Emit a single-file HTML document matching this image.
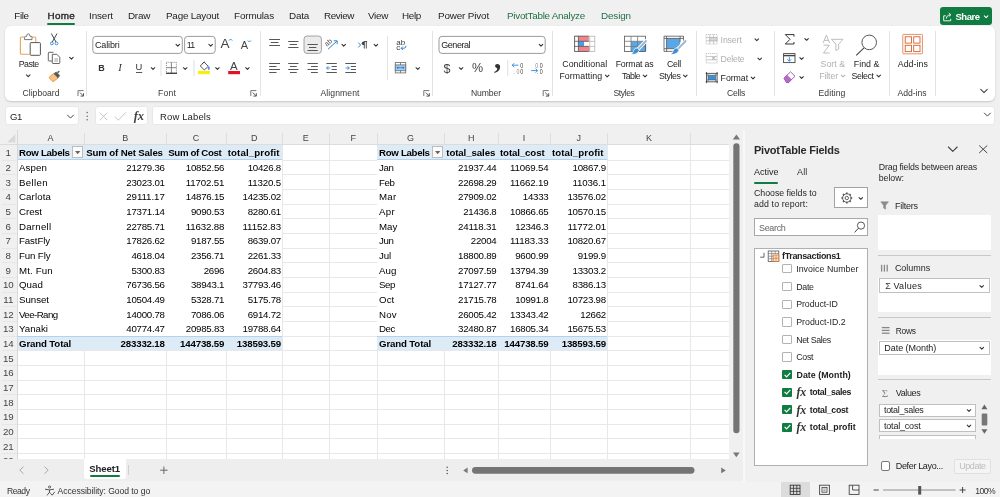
<!DOCTYPE html>
<html><head><meta charset="utf-8"><title>Excel</title><style>
html,body{margin:0;padding:0;}
body{width:1000px;height:497px;overflow:hidden;position:relative;background:#f0f0f0;font-family:"Liberation Sans",sans-serif;}
#root{position:absolute;left:0;top:0;width:1000px;height:497px;overflow:hidden;will-change:transform;}
#root div{position:absolute;box-sizing:border-box;}
#root svg{position:absolute;overflow:visible;}
.t{position:absolute;white-space:nowrap;}
</style></head><body><div id="root">
<div style="left:5px;top:26px;width:990px;height:75px;background:#fff;border-radius:6px;box-shadow:0 1px 2px rgba(0,0,0,0.18);"></div>
<div style="left:5px;top:106.3px;width:74px;height:19px;background:#fff;border-radius:3px;border:1px solid #e8e8e8;"></div>
<div style="left:95px;top:106.3px;width:53px;height:19px;background:#fff;border-radius:3px;border:1px solid #e8e8e8;"></div>
<div style="left:152px;top:106.3px;width:842.5px;height:19px;background:#fff;border-radius:3px;border:1px solid #e8e8e8;"></div>
<span id="t1" class="t" style="top:9.30px;font-size:9.9px;line-height:14px;color:#242424;letter-spacing:-0.405px;left:14.3px;">File</span>
<span id="t2" class="t" style="top:9.30px;font-size:9.9px;line-height:14px;color:#242424;letter-spacing:0.264px;left:47.6px;-webkit-text-stroke:0.35px #242424;">Home</span>
<span id="t3" class="t" style="top:9.30px;font-size:9.9px;line-height:14px;color:#242424;letter-spacing:-0.117px;left:89px;">Insert</span>
<span id="t4" class="t" style="top:9.30px;font-size:9.9px;line-height:14px;color:#242424;letter-spacing:-0.262px;left:128px;">Draw</span>
<span id="t5" class="t" style="top:9.30px;font-size:9.9px;line-height:14px;color:#242424;letter-spacing:-0.224px;left:166px;">Page Layout</span>
<span id="t6" class="t" style="top:9.30px;font-size:9.9px;line-height:14px;color:#242424;letter-spacing:-0.145px;left:234px;">Formulas</span>
<span id="t7" class="t" style="top:9.30px;font-size:9.9px;line-height:14px;color:#242424;letter-spacing:-0.215px;left:289px;">Data</span>
<span id="t8" class="t" style="top:9.30px;font-size:9.9px;line-height:14px;color:#242424;letter-spacing:-0.398px;left:324px;">Review</span>
<span id="t9" class="t" style="top:9.30px;font-size:9.9px;line-height:14px;color:#242424;letter-spacing:-0.309px;left:368px;">View</span>
<span id="t10" class="t" style="top:9.30px;font-size:9.9px;line-height:14px;color:#242424;letter-spacing:-0.328px;left:402px;">Help</span>
<span id="t11" class="t" style="top:9.30px;font-size:9.9px;line-height:14px;color:#242424;letter-spacing:-0.155px;left:438px;">Power Pivot</span>
<span id="t12" class="t" style="top:9.30px;font-size:9.9px;line-height:14px;color:#1e7145;letter-spacing:-0.272px;left:507px;">PivotTable Analyze</span>
<span id="t13" class="t" style="top:9.30px;font-size:9.9px;line-height:14px;color:#1e7145;letter-spacing:-0.125px;left:601px;">Design</span>
<div style="left:47px;top:23px;width:28px;height:2px;background:#107c41;border-radius:1px;"></div>
<div style="left:940px;top:7px;width:52px;height:18px;background:#107c41;border-radius:3px;"></div>
<span id="t14" class="t" style="top:9.50px;font-size:9.5px;line-height:14px;color:#fff;font-weight:bold;letter-spacing:-0.481px;left:955.5px;">Share</span>
<span id="t15" class="t" style="top:86.00px;font-size:8.6px;line-height:14px;color:#383838;letter-spacing:0.023px;left:41px;transform:translateX(-50%);">Clipboard</span>
<span id="t16" class="t" style="top:86.00px;font-size:8.6px;line-height:14px;color:#383838;letter-spacing:0.199px;left:167px;transform:translateX(-50%);">Font</span>
<span id="t17" class="t" style="top:86.00px;font-size:8.6px;line-height:14px;color:#383838;letter-spacing:0.087px;left:340px;transform:translateX(-50%);">Alignment</span>
<span id="t18" class="t" style="top:86.00px;font-size:8.6px;line-height:14px;color:#383838;letter-spacing:-0.096px;left:486px;transform:translateX(-50%);">Number</span>
<span id="t19" class="t" style="top:86.00px;font-size:8.6px;line-height:14px;color:#383838;letter-spacing:-0.401px;left:624px;transform:translateX(-50%);">Styles</span>
<span id="t20" class="t" style="top:86.00px;font-size:8.6px;line-height:14px;color:#383838;letter-spacing:-0.222px;left:736px;transform:translateX(-50%);">Cells</span>
<span id="t21" class="t" style="top:86.00px;font-size:8.6px;line-height:14px;color:#383838;letter-spacing:0.103px;left:832px;transform:translateX(-50%);">Editing</span>
<span id="t22" class="t" style="top:86.00px;font-size:8.6px;line-height:14px;color:#383838;letter-spacing:-0.020px;left:912px;transform:translateX(-50%);">Add-ins</span>
<div style="left:86px;top:31px;width:1px;height:65px;background:#e3e3e3;"></div>
<div style="left:260px;top:31px;width:1px;height:65px;background:#e3e3e3;"></div>
<div style="left:432px;top:31px;width:1px;height:65px;background:#e3e3e3;"></div>
<div style="left:552px;top:31px;width:1px;height:65px;background:#e3e3e3;"></div>
<div style="left:696px;top:31px;width:1px;height:65px;background:#e3e3e3;"></div>
<div style="left:774px;top:31px;width:1px;height:65px;background:#e3e3e3;"></div>
<div style="left:889px;top:31px;width:1px;height:65px;background:#e3e3e3;"></div>
<div style="left:935px;top:31px;width:1px;height:65px;background:#e3e3e3;"></div>
<div style="left:387px;top:36px;width:1px;height:44px;background:#e3e3e3;"></div>
<span id="t23" class="t" style="top:109.50px;font-size:9.5px;line-height:14px;color:#242424;letter-spacing:-0.344px;left:10px;">G1</span>
<span id="t24" class="t" style="top:109.50px;font-size:9.5px;line-height:14px;color:#242424;letter-spacing:0.136px;left:160px;">Row Labels</span>
<div style="left:0px;top:130px;width:729px;height:329px;background:#fff;"></div>
<div style="left:0px;top:130px;width:729px;height:15px;background:#f0f0f0;"></div>
<div style="left:0px;top:130px;width:17px;height:329px;background:#f0f0f0;"></div>
<svg style="left:6.8px;top:134.2px" width="8.4" height="8.4"><path d="M8.4 0V8.4H0Z" fill="#d9d9d9"/></svg>
<div style="left:17px;top:145.0px;width:265.5px;height:14.6667px;background:#ddebf7;border-bottom:1px solid #b4d2ee;"></div>
<div style="left:377px;top:145.0px;width:230.39999999999998px;height:14.6667px;background:#ddebf7;border-bottom:1px solid #b4d2ee;"></div>
<div style="left:17px;top:335.6671px;width:265.5px;height:14.6667px;background:#ddebf7;border-top:1px solid #b4d2ee;"></div>
<div style="left:377px;top:335.6671px;width:230.39999999999998px;height:14.6667px;background:#ddebf7;border-top:1px solid #b4d2ee;"></div>
<div style="left:84px;top:133px;width:1px;height:12px;background:#dedede;"></div>
<div style="left:166px;top:133px;width:1px;height:12px;background:#dedede;"></div>
<div style="left:226px;top:133px;width:1px;height:12px;background:#dedede;"></div>
<div style="left:282px;top:133px;width:1px;height:12px;background:#dedede;"></div>
<div style="left:329px;top:133px;width:1px;height:12px;background:#dedede;"></div>
<div style="left:377px;top:133px;width:1px;height:12px;background:#dedede;"></div>
<div style="left:444px;top:133px;width:1px;height:12px;background:#dedede;"></div>
<div style="left:498px;top:133px;width:1px;height:12px;background:#dedede;"></div>
<div style="left:550px;top:133px;width:1px;height:12px;background:#dedede;"></div>
<div style="left:607px;top:133px;width:1px;height:12px;background:#dedede;"></div>
<div style="left:690px;top:133px;width:1px;height:12px;background:#dedede;"></div>
<div style="left:84px;top:350.3338px;width:1px;height:108.6662px;background:#e8e8e8;"></div>
<div style="left:166px;top:350.3338px;width:1px;height:108.6662px;background:#e8e8e8;"></div>
<div style="left:226px;top:350.3338px;width:1px;height:108.6662px;background:#e8e8e8;"></div>
<div style="left:282px;top:145px;width:1px;height:314px;background:#e8e8e8;"></div>
<div style="left:329px;top:145px;width:1px;height:314px;background:#e8e8e8;"></div>
<div style="left:377px;top:350.3338px;width:1px;height:108.6662px;background:#e8e8e8;"></div>
<div style="left:444px;top:350.3338px;width:1px;height:108.6662px;background:#e8e8e8;"></div>
<div style="left:498px;top:350.3338px;width:1px;height:108.6662px;background:#e8e8e8;"></div>
<div style="left:550px;top:350.3338px;width:1px;height:108.6662px;background:#e8e8e8;"></div>
<div style="left:607px;top:145px;width:1px;height:314px;background:#e8e8e8;"></div>
<div style="left:690px;top:145px;width:1px;height:314px;background:#e8e8e8;"></div>
<div style="left:282.5px;top:160px;width:94.5px;height:1px;background:#e8e8e8;"></div>
<div style="left:607.4px;top:160px;width:121.60000000000002px;height:1px;background:#e8e8e8;"></div>
<div style="left:2px;top:160px;width:15px;height:1px;background:#e6e6e6;"></div>
<div style="left:282.5px;top:174px;width:94.5px;height:1px;background:#e8e8e8;"></div>
<div style="left:607.4px;top:174px;width:121.60000000000002px;height:1px;background:#e8e8e8;"></div>
<div style="left:2px;top:174px;width:15px;height:1px;background:#e6e6e6;"></div>
<div style="left:282.5px;top:189px;width:94.5px;height:1px;background:#e8e8e8;"></div>
<div style="left:607.4px;top:189px;width:121.60000000000002px;height:1px;background:#e8e8e8;"></div>
<div style="left:2px;top:189px;width:15px;height:1px;background:#e6e6e6;"></div>
<div style="left:282.5px;top:204px;width:94.5px;height:1px;background:#e8e8e8;"></div>
<div style="left:607.4px;top:204px;width:121.60000000000002px;height:1px;background:#e8e8e8;"></div>
<div style="left:2px;top:204px;width:15px;height:1px;background:#e6e6e6;"></div>
<div style="left:282.5px;top:218px;width:94.5px;height:1px;background:#e8e8e8;"></div>
<div style="left:607.4px;top:218px;width:121.60000000000002px;height:1px;background:#e8e8e8;"></div>
<div style="left:2px;top:218px;width:15px;height:1px;background:#e6e6e6;"></div>
<div style="left:282.5px;top:233px;width:94.5px;height:1px;background:#e8e8e8;"></div>
<div style="left:607.4px;top:233px;width:121.60000000000002px;height:1px;background:#e8e8e8;"></div>
<div style="left:2px;top:233px;width:15px;height:1px;background:#e6e6e6;"></div>
<div style="left:282.5px;top:248px;width:94.5px;height:1px;background:#e8e8e8;"></div>
<div style="left:607.4px;top:248px;width:121.60000000000002px;height:1px;background:#e8e8e8;"></div>
<div style="left:2px;top:248px;width:15px;height:1px;background:#e6e6e6;"></div>
<div style="left:282.5px;top:262px;width:94.5px;height:1px;background:#e8e8e8;"></div>
<div style="left:607.4px;top:262px;width:121.60000000000002px;height:1px;background:#e8e8e8;"></div>
<div style="left:2px;top:262px;width:15px;height:1px;background:#e6e6e6;"></div>
<div style="left:282.5px;top:277px;width:94.5px;height:1px;background:#e8e8e8;"></div>
<div style="left:607.4px;top:277px;width:121.60000000000002px;height:1px;background:#e8e8e8;"></div>
<div style="left:2px;top:277px;width:15px;height:1px;background:#e6e6e6;"></div>
<div style="left:282.5px;top:292px;width:94.5px;height:1px;background:#e8e8e8;"></div>
<div style="left:607.4px;top:292px;width:121.60000000000002px;height:1px;background:#e8e8e8;"></div>
<div style="left:2px;top:292px;width:15px;height:1px;background:#e6e6e6;"></div>
<div style="left:282.5px;top:306px;width:94.5px;height:1px;background:#e8e8e8;"></div>
<div style="left:607.4px;top:306px;width:121.60000000000002px;height:1px;background:#e8e8e8;"></div>
<div style="left:2px;top:306px;width:15px;height:1px;background:#e6e6e6;"></div>
<div style="left:282.5px;top:321px;width:94.5px;height:1px;background:#e8e8e8;"></div>
<div style="left:607.4px;top:321px;width:121.60000000000002px;height:1px;background:#e8e8e8;"></div>
<div style="left:2px;top:321px;width:15px;height:1px;background:#e6e6e6;"></div>
<div style="left:282.5px;top:336px;width:94.5px;height:1px;background:#e8e8e8;"></div>
<div style="left:607.4px;top:336px;width:121.60000000000002px;height:1px;background:#e8e8e8;"></div>
<div style="left:2px;top:336px;width:15px;height:1px;background:#e6e6e6;"></div>
<div style="left:17px;top:350px;width:712px;height:1px;background:#e8e8e8;"></div>
<div style="left:2px;top:350px;width:15px;height:1px;background:#e6e6e6;"></div>
<div style="left:17px;top:365px;width:712px;height:1px;background:#e8e8e8;"></div>
<div style="left:2px;top:365px;width:15px;height:1px;background:#e6e6e6;"></div>
<div style="left:17px;top:380px;width:712px;height:1px;background:#e8e8e8;"></div>
<div style="left:2px;top:380px;width:15px;height:1px;background:#e6e6e6;"></div>
<div style="left:17px;top:394px;width:712px;height:1px;background:#e8e8e8;"></div>
<div style="left:2px;top:394px;width:15px;height:1px;background:#e6e6e6;"></div>
<div style="left:17px;top:409px;width:712px;height:1px;background:#e8e8e8;"></div>
<div style="left:2px;top:409px;width:15px;height:1px;background:#e6e6e6;"></div>
<div style="left:17px;top:424px;width:712px;height:1px;background:#e8e8e8;"></div>
<div style="left:2px;top:424px;width:15px;height:1px;background:#e6e6e6;"></div>
<div style="left:17px;top:438px;width:712px;height:1px;background:#e8e8e8;"></div>
<div style="left:2px;top:438px;width:15px;height:1px;background:#e6e6e6;"></div>
<div style="left:17px;top:453px;width:712px;height:1px;background:#e8e8e8;"></div>
<div style="left:2px;top:453px;width:15px;height:1px;background:#e6e6e6;"></div>
<div style="left:0px;top:144px;width:729px;height:1px;background:#dcdcdc;"></div>
<div style="left:17px;top:130px;width:1px;height:329px;background:#d8d8d8;"></div>
<span id="t25" class="t" style="top:131.00px;font-size:9px;line-height:14px;color:#444;left:50.625px;transform:translateX(-50%);">A</span>
<span id="t26" class="t" style="top:131.00px;font-size:9px;line-height:14px;color:#444;left:125.25px;transform:translateX(-50%);">B</span>
<span id="t27" class="t" style="top:131.00px;font-size:9px;line-height:14px;color:#444;left:196.0px;transform:translateX(-50%);">C</span>
<span id="t28" class="t" style="top:131.00px;font-size:9px;line-height:14px;color:#444;left:254.125px;transform:translateX(-50%);">D</span>
<span id="t29" class="t" style="top:131.00px;font-size:9px;line-height:14px;color:#444;left:305.875px;transform:translateX(-50%);">E</span>
<span id="t30" class="t" style="top:131.00px;font-size:9px;line-height:14px;color:#444;left:353.125px;transform:translateX(-50%);">F</span>
<span id="t31" class="t" style="top:131.00px;font-size:9px;line-height:14px;color:#444;left:410.625px;transform:translateX(-50%);">G</span>
<span id="t32" class="t" style="top:131.00px;font-size:9px;line-height:14px;color:#444;left:471.125px;transform:translateX(-50%);">H</span>
<span id="t33" class="t" style="top:131.00px;font-size:9px;line-height:14px;color:#444;left:524.0px;transform:translateX(-50%);">I</span>
<span id="t34" class="t" style="top:131.00px;font-size:9px;line-height:14px;color:#444;left:578.7px;transform:translateX(-50%);">J</span>
<span id="t35" class="t" style="top:131.00px;font-size:9px;line-height:14px;color:#444;left:648.9px;transform:translateX(-50%);">K</span>
<span id="t36" class="t" style="top:146.23px;font-size:9.7px;line-height:14px;color:#444;left:8.3px;transform:translateX(-50%);">1</span>
<span id="t37" class="t" style="top:160.90px;font-size:9.7px;line-height:14px;color:#444;left:8.3px;transform:translateX(-50%);">2</span>
<span id="t38" class="t" style="top:175.57px;font-size:9.7px;line-height:14px;color:#444;left:8.3px;transform:translateX(-50%);">3</span>
<span id="t39" class="t" style="top:190.23px;font-size:9.7px;line-height:14px;color:#444;left:8.3px;transform:translateX(-50%);">4</span>
<span id="t40" class="t" style="top:204.90px;font-size:9.7px;line-height:14px;color:#444;left:8.3px;transform:translateX(-50%);">5</span>
<span id="t41" class="t" style="top:219.57px;font-size:9.7px;line-height:14px;color:#444;left:8.3px;transform:translateX(-50%);">6</span>
<span id="t42" class="t" style="top:234.23px;font-size:9.7px;line-height:14px;color:#444;left:8.3px;transform:translateX(-50%);">7</span>
<span id="t43" class="t" style="top:248.90px;font-size:9.7px;line-height:14px;color:#444;left:8.3px;transform:translateX(-50%);">8</span>
<span id="t44" class="t" style="top:263.57px;font-size:9.7px;line-height:14px;color:#444;left:8.3px;transform:translateX(-50%);">9</span>
<span id="t45" class="t" style="top:278.23px;font-size:9.7px;line-height:14px;color:#444;left:8.3px;transform:translateX(-50%);">10</span>
<span id="t46" class="t" style="top:292.90px;font-size:9.7px;line-height:14px;color:#444;left:8.3px;transform:translateX(-50%);">11</span>
<span id="t47" class="t" style="top:307.57px;font-size:9.7px;line-height:14px;color:#444;left:8.3px;transform:translateX(-50%);">12</span>
<span id="t48" class="t" style="top:322.23px;font-size:9.7px;line-height:14px;color:#444;left:8.3px;transform:translateX(-50%);">13</span>
<span id="t49" class="t" style="top:336.90px;font-size:9.7px;line-height:14px;color:#444;left:8.3px;transform:translateX(-50%);">14</span>
<span id="t50" class="t" style="top:351.57px;font-size:9.7px;line-height:14px;color:#444;left:8.3px;transform:translateX(-50%);">15</span>
<span id="t51" class="t" style="top:366.23px;font-size:9.7px;line-height:14px;color:#444;left:8.3px;transform:translateX(-50%);">16</span>
<span id="t52" class="t" style="top:380.90px;font-size:9.7px;line-height:14px;color:#444;left:8.3px;transform:translateX(-50%);">17</span>
<span id="t53" class="t" style="top:395.57px;font-size:9.7px;line-height:14px;color:#444;left:8.3px;transform:translateX(-50%);">18</span>
<span id="t54" class="t" style="top:410.23px;font-size:9.7px;line-height:14px;color:#444;left:8.3px;transform:translateX(-50%);">19</span>
<span id="t55" class="t" style="top:424.90px;font-size:9.7px;line-height:14px;color:#444;left:8.3px;transform:translateX(-50%);">20</span>
<span id="t56" class="t" style="top:439.57px;font-size:9.7px;line-height:14px;color:#444;left:8.3px;transform:translateX(-50%);">21</span>
<span id="t57" class="t" style="top:454.23px;font-size:9.7px;line-height:14px;color:#444;left:8.3px;transform:translateX(-50%);">22</span>
<span id="t58" class="t" style="top:146.33px;font-size:9.7px;line-height:14px;color:#000;font-weight:bold;letter-spacing:-0.314px;left:19px;">Row Labels</span>
<span id="t59" class="t" style="top:146.33px;font-size:9.7px;line-height:14px;color:#000;font-weight:bold;letter-spacing:-0.159px;left:86.25px;">Sum of Net Sales</span>
<span id="t60" class="t" style="top:146.33px;font-size:9.7px;line-height:14px;color:#000;font-weight:bold;letter-spacing:-0.350px;left:168.25px;">Sum of Cost</span>
<span id="t61" class="t" style="top:146.33px;font-size:9.7px;line-height:14px;color:#000;font-weight:bold;letter-spacing:0.109px;left:227.75px;">total_profit</span>
<span id="t62" class="t" style="top:161.00px;font-size:9.7px;line-height:14px;color:#000;letter-spacing:0.106px;left:19px;">Aspen</span>
<span id="t63" class="t" style="top:161.00px;font-size:9.7px;line-height:14px;color:#000;letter-spacing:-0.237px;right:835.25px;">21279.36</span>
<span id="t64" class="t" style="top:161.00px;font-size:9.7px;line-height:14px;color:#000;letter-spacing:-0.237px;right:775.75px;">10852.56</span>
<span id="t65" class="t" style="top:161.00px;font-size:9.7px;line-height:14px;color:#000;letter-spacing:-0.236px;right:719.0px;">10426.8</span>
<span id="t66" class="t" style="top:175.67px;font-size:9.7px;line-height:14px;color:#000;letter-spacing:0.344px;left:19px;">Bellen</span>
<span id="t67" class="t" style="top:175.67px;font-size:9.7px;line-height:14px;color:#000;letter-spacing:-0.237px;right:835.25px;">23023.01</span>
<span id="t68" class="t" style="top:175.67px;font-size:9.7px;line-height:14px;color:#000;letter-spacing:-0.147px;right:775.75px;">11702.51</span>
<span id="t69" class="t" style="top:175.67px;font-size:9.7px;line-height:14px;color:#000;letter-spacing:-0.133px;right:719.0px;">11320.5</span>
<span id="t70" class="t" style="top:190.33px;font-size:9.7px;line-height:14px;color:#000;letter-spacing:0.109px;left:19px;">Carlota</span>
<span id="t71" class="t" style="top:190.33px;font-size:9.7px;line-height:14px;color:#000;letter-spacing:-0.057px;right:835.25px;">29111.17</span>
<span id="t72" class="t" style="top:190.33px;font-size:9.7px;line-height:14px;color:#000;letter-spacing:-0.237px;right:775.75px;">14876.15</span>
<span id="t73" class="t" style="top:190.33px;font-size:9.7px;line-height:14px;color:#000;letter-spacing:-0.237px;right:719.0px;">14235.02</span>
<span id="t74" class="t" style="top:205.00px;font-size:9.7px;line-height:14px;color:#000;letter-spacing:-0.031px;left:19px;">Crest</span>
<span id="t75" class="t" style="top:205.00px;font-size:9.7px;line-height:14px;color:#000;letter-spacing:-0.237px;right:835.25px;">17371.14</span>
<span id="t76" class="t" style="top:205.00px;font-size:9.7px;line-height:14px;color:#000;letter-spacing:-0.236px;right:775.75px;">9090.53</span>
<span id="t77" class="t" style="top:205.00px;font-size:9.7px;line-height:14px;color:#000;letter-spacing:-0.236px;right:719.0px;">8280.61</span>
<span id="t78" class="t" style="top:219.67px;font-size:9.7px;line-height:14px;color:#000;letter-spacing:0.242px;left:19px;">Darnell</span>
<span id="t79" class="t" style="top:219.67px;font-size:9.7px;line-height:14px;color:#000;letter-spacing:-0.237px;right:835.25px;">22785.71</span>
<span id="t80" class="t" style="top:219.67px;font-size:9.7px;line-height:14px;color:#000;letter-spacing:-0.147px;right:775.75px;">11632.88</span>
<span id="t81" class="t" style="top:219.67px;font-size:9.7px;line-height:14px;color:#000;letter-spacing:-0.057px;right:719.0px;">11152.83</span>
<span id="t82" class="t" style="top:234.33px;font-size:9.7px;line-height:14px;color:#000;letter-spacing:-0.109px;left:19px;">FastFly</span>
<span id="t83" class="t" style="top:234.33px;font-size:9.7px;line-height:14px;color:#000;letter-spacing:-0.237px;right:835.25px;">17826.62</span>
<span id="t84" class="t" style="top:234.33px;font-size:9.7px;line-height:14px;color:#000;letter-spacing:-0.236px;right:775.75px;">9187.55</span>
<span id="t85" class="t" style="top:234.33px;font-size:9.7px;line-height:14px;color:#000;letter-spacing:-0.236px;right:719.0px;">8639.07</span>
<span id="t86" class="t" style="top:249.00px;font-size:9.7px;line-height:14px;color:#000;letter-spacing:-0.130px;left:19px;">Fun Fly</span>
<span id="t87" class="t" style="top:249.00px;font-size:9.7px;line-height:14px;color:#000;letter-spacing:-0.236px;right:835.25px;">4618.04</span>
<span id="t88" class="t" style="top:249.00px;font-size:9.7px;line-height:14px;color:#000;letter-spacing:-0.236px;right:775.75px;">2356.71</span>
<span id="t89" class="t" style="top:249.00px;font-size:9.7px;line-height:14px;color:#000;letter-spacing:-0.236px;right:719.0px;">2261.33</span>
<span id="t90" class="t" style="top:263.67px;font-size:9.7px;line-height:14px;color:#000;letter-spacing:0.137px;left:19px;">Mt. Fun</span>
<span id="t91" class="t" style="top:263.67px;font-size:9.7px;line-height:14px;color:#000;letter-spacing:-0.236px;right:835.25px;">5300.83</span>
<span id="t92" class="t" style="top:263.67px;font-size:9.7px;line-height:14px;color:#000;letter-spacing:-0.261px;right:775.75px;">2696</span>
<span id="t93" class="t" style="top:263.67px;font-size:9.7px;line-height:14px;color:#000;letter-spacing:-0.236px;right:719.0px;">2604.83</span>
<span id="t94" class="t" style="top:278.33px;font-size:9.7px;line-height:14px;color:#000;letter-spacing:0.074px;left:19px;">Quad</span>
<span id="t95" class="t" style="top:278.33px;font-size:9.7px;line-height:14px;color:#000;letter-spacing:-0.237px;right:835.25px;">76736.56</span>
<span id="t96" class="t" style="top:278.33px;font-size:9.7px;line-height:14px;color:#000;letter-spacing:-0.236px;right:775.75px;">38943.1</span>
<span id="t97" class="t" style="top:278.33px;font-size:9.7px;line-height:14px;color:#000;letter-spacing:-0.237px;right:719.0px;">37793.46</span>
<span id="t98" class="t" style="top:293.00px;font-size:9.7px;line-height:14px;color:#000;letter-spacing:-0.029px;left:19px;">Sunset</span>
<span id="t99" class="t" style="top:293.00px;font-size:9.7px;line-height:14px;color:#000;letter-spacing:-0.237px;right:835.25px;">10504.49</span>
<span id="t100" class="t" style="top:293.00px;font-size:9.7px;line-height:14px;color:#000;letter-spacing:-0.236px;right:775.75px;">5328.71</span>
<span id="t101" class="t" style="top:293.00px;font-size:9.7px;line-height:14px;color:#000;letter-spacing:-0.236px;right:719.0px;">5175.78</span>
<span id="t102" class="t" style="top:307.67px;font-size:9.7px;line-height:14px;color:#000;letter-spacing:-0.562px;left:19px;">Vee-Rang</span>
<span id="t103" class="t" style="top:307.67px;font-size:9.7px;line-height:14px;color:#000;letter-spacing:-0.237px;right:835.25px;">14000.78</span>
<span id="t104" class="t" style="top:307.67px;font-size:9.7px;line-height:14px;color:#000;letter-spacing:-0.236px;right:775.75px;">7086.06</span>
<span id="t105" class="t" style="top:307.67px;font-size:9.7px;line-height:14px;color:#000;letter-spacing:-0.236px;right:719.0px;">6914.72</span>
<span id="t106" class="t" style="top:322.33px;font-size:9.7px;line-height:14px;color:#000;letter-spacing:0.016px;left:19px;">Yanaki</span>
<span id="t107" class="t" style="top:322.33px;font-size:9.7px;line-height:14px;color:#000;letter-spacing:-0.237px;right:835.25px;">40774.47</span>
<span id="t108" class="t" style="top:322.33px;font-size:9.7px;line-height:14px;color:#000;letter-spacing:-0.237px;right:775.75px;">20985.83</span>
<span id="t109" class="t" style="top:322.33px;font-size:9.7px;line-height:14px;color:#000;letter-spacing:-0.237px;right:719.0px;">19788.64</span>
<span id="t110" class="t" style="top:337.00px;font-size:9.7px;line-height:14px;color:#000;font-weight:bold;letter-spacing:-0.149px;left:19px;">Grand Total</span>
<span id="t111" class="t" style="top:337.00px;font-size:9.7px;line-height:14px;color:#000;font-weight:bold;letter-spacing:-0.177px;right:835.25px;">283332.18</span>
<span id="t112" class="t" style="top:337.00px;font-size:9.7px;line-height:14px;color:#000;font-weight:bold;letter-spacing:-0.177px;right:775.75px;">144738.59</span>
<span id="t113" class="t" style="top:337.00px;font-size:9.7px;line-height:14px;color:#000;font-weight:bold;letter-spacing:-0.177px;right:719.0px;">138593.59</span>
<span id="t114" class="t" style="top:146.33px;font-size:9.7px;line-height:14px;color:#000;font-weight:bold;letter-spacing:-0.314px;left:379px;">Row Labels</span>
<span id="t115" class="t" style="top:146.33px;font-size:9.7px;line-height:14px;color:#000;font-weight:bold;letter-spacing:-0.099px;left:446.25px;">total_sales</span>
<span id="t116" class="t" style="top:146.33px;font-size:9.7px;line-height:14px;color:#000;font-weight:bold;letter-spacing:-0.127px;left:500px;">total_cost</span>
<span id="t117" class="t" style="top:146.33px;font-size:9.7px;line-height:14px;color:#000;font-weight:bold;letter-spacing:0.084px;left:552px;">total_profit</span>
<span id="t118" class="t" style="top:161.00px;font-size:9.7px;line-height:14px;color:#000;letter-spacing:-0.375px;left:379px;">Jan</span>
<span id="t119" class="t" style="top:161.00px;font-size:9.7px;line-height:14px;color:#000;letter-spacing:-0.237px;right:503.5px;">21937.44</span>
<span id="t120" class="t" style="top:161.00px;font-size:9.7px;line-height:14px;color:#000;letter-spacing:-0.147px;right:451.5px;">11069.54</span>
<span id="t121" class="t" style="top:161.00px;font-size:9.7px;line-height:14px;color:#000;letter-spacing:-0.236px;right:394.1px;">10867.9</span>
<span id="t122" class="t" style="top:175.67px;font-size:9.7px;line-height:14px;color:#000;letter-spacing:-0.434px;left:379px;">Feb</span>
<span id="t123" class="t" style="top:175.67px;font-size:9.7px;line-height:14px;color:#000;letter-spacing:-0.237px;right:503.5px;">22698.29</span>
<span id="t124" class="t" style="top:175.67px;font-size:9.7px;line-height:14px;color:#000;letter-spacing:-0.147px;right:451.5px;">11662.19</span>
<span id="t125" class="t" style="top:175.67px;font-size:9.7px;line-height:14px;color:#000;letter-spacing:-0.133px;right:394.1px;">11036.1</span>
<span id="t126" class="t" style="top:190.33px;font-size:9.7px;line-height:14px;color:#000;letter-spacing:0.237px;left:379px;">Mar</span>
<span id="t127" class="t" style="top:190.33px;font-size:9.7px;line-height:14px;color:#000;letter-spacing:-0.237px;right:503.5px;">27909.02</span>
<span id="t128" class="t" style="top:190.33px;font-size:9.7px;line-height:14px;color:#000;letter-spacing:-0.261px;right:451.5px;">14333</span>
<span id="t129" class="t" style="top:190.33px;font-size:9.7px;line-height:14px;color:#000;letter-spacing:-0.237px;right:394.1px;">13576.02</span>
<span id="t130" class="t" style="top:205.00px;font-size:9.7px;line-height:14px;color:#000;letter-spacing:0.307px;left:379px;">Apr</span>
<span id="t131" class="t" style="top:205.00px;font-size:9.7px;line-height:14px;color:#000;letter-spacing:-0.236px;right:503.5px;">21436.8</span>
<span id="t132" class="t" style="top:205.00px;font-size:9.7px;line-height:14px;color:#000;letter-spacing:-0.237px;right:451.5px;">10866.65</span>
<span id="t133" class="t" style="top:205.00px;font-size:9.7px;line-height:14px;color:#000;letter-spacing:-0.237px;right:394.1px;">10570.15</span>
<span id="t134" class="t" style="top:219.67px;font-size:9.7px;line-height:14px;color:#000;letter-spacing:-0.004px;left:379px;">May</span>
<span id="t135" class="t" style="top:219.67px;font-size:9.7px;line-height:14px;color:#000;letter-spacing:-0.147px;right:503.5px;">24118.31</span>
<span id="t136" class="t" style="top:219.67px;font-size:9.7px;line-height:14px;color:#000;letter-spacing:-0.236px;right:451.5px;">12346.3</span>
<span id="t137" class="t" style="top:219.67px;font-size:9.7px;line-height:14px;color:#000;letter-spacing:-0.147px;right:394.1px;">11772.01</span>
<span id="t138" class="t" style="top:234.33px;font-size:9.7px;line-height:14px;color:#000;letter-spacing:-0.375px;left:379px;">Jun</span>
<span id="t139" class="t" style="top:234.33px;font-size:9.7px;line-height:14px;color:#000;letter-spacing:-0.261px;right:503.5px;">22004</span>
<span id="t140" class="t" style="top:234.33px;font-size:9.7px;line-height:14px;color:#000;letter-spacing:-0.057px;right:451.5px;">11183.33</span>
<span id="t141" class="t" style="top:234.33px;font-size:9.7px;line-height:14px;color:#000;letter-spacing:-0.237px;right:394.1px;">10820.67</span>
<span id="t142" class="t" style="top:249.00px;font-size:9.7px;line-height:14px;color:#000;letter-spacing:-0.130px;left:379px;">Jul</span>
<span id="t143" class="t" style="top:249.00px;font-size:9.7px;line-height:14px;color:#000;letter-spacing:-0.237px;right:503.5px;">18800.89</span>
<span id="t144" class="t" style="top:249.00px;font-size:9.7px;line-height:14px;color:#000;letter-spacing:-0.236px;right:451.5px;">9600.99</span>
<span id="t145" class="t" style="top:249.00px;font-size:9.7px;line-height:14px;color:#000;letter-spacing:-0.232px;right:394.1px;">9199.9</span>
<span id="t146" class="t" style="top:263.67px;font-size:9.7px;line-height:14px;color:#000;letter-spacing:0.050px;left:379px;">Aug</span>
<span id="t147" class="t" style="top:263.67px;font-size:9.7px;line-height:14px;color:#000;letter-spacing:-0.237px;right:503.5px;">27097.59</span>
<span id="t148" class="t" style="top:263.67px;font-size:9.7px;line-height:14px;color:#000;letter-spacing:-0.237px;right:451.5px;">13794.39</span>
<span id="t149" class="t" style="top:263.67px;font-size:9.7px;line-height:14px;color:#000;letter-spacing:-0.236px;right:394.1px;">13303.2</span>
<span id="t150" class="t" style="top:278.33px;font-size:9.7px;line-height:14px;color:#000;letter-spacing:-0.417px;left:379px;">Sep</span>
<span id="t151" class="t" style="top:278.33px;font-size:9.7px;line-height:14px;color:#000;letter-spacing:-0.237px;right:503.5px;">17127.77</span>
<span id="t152" class="t" style="top:278.33px;font-size:9.7px;line-height:14px;color:#000;letter-spacing:-0.236px;right:451.5px;">8741.64</span>
<span id="t153" class="t" style="top:278.33px;font-size:9.7px;line-height:14px;color:#000;letter-spacing:-0.236px;right:394.1px;">8386.13</span>
<span id="t154" class="t" style="top:293.00px;font-size:9.7px;line-height:14px;color:#000;letter-spacing:0.107px;left:379px;">Oct</span>
<span id="t155" class="t" style="top:293.00px;font-size:9.7px;line-height:14px;color:#000;letter-spacing:-0.237px;right:503.5px;">21715.78</span>
<span id="t156" class="t" style="top:293.00px;font-size:9.7px;line-height:14px;color:#000;letter-spacing:-0.236px;right:451.5px;">10991.8</span>
<span id="t157" class="t" style="top:293.00px;font-size:9.7px;line-height:14px;color:#000;letter-spacing:-0.237px;right:394.1px;">10723.98</span>
<span id="t158" class="t" style="top:307.67px;font-size:9.7px;line-height:14px;color:#000;letter-spacing:0.222px;left:379px;">Nov</span>
<span id="t159" class="t" style="top:307.67px;font-size:9.7px;line-height:14px;color:#000;letter-spacing:-0.237px;right:503.5px;">26005.42</span>
<span id="t160" class="t" style="top:307.67px;font-size:9.7px;line-height:14px;color:#000;letter-spacing:-0.237px;right:451.5px;">13343.42</span>
<span id="t161" class="t" style="top:307.67px;font-size:9.7px;line-height:14px;color:#000;letter-spacing:-0.261px;right:394.1px;">12662</span>
<span id="t162" class="t" style="top:322.33px;font-size:9.7px;line-height:14px;color:#000;letter-spacing:-0.411px;left:379px;">Dec</span>
<span id="t163" class="t" style="top:322.33px;font-size:9.7px;line-height:14px;color:#000;letter-spacing:-0.237px;right:503.5px;">32480.87</span>
<span id="t164" class="t" style="top:322.33px;font-size:9.7px;line-height:14px;color:#000;letter-spacing:-0.237px;right:451.5px;">16805.34</span>
<span id="t165" class="t" style="top:322.33px;font-size:9.7px;line-height:14px;color:#000;letter-spacing:-0.237px;right:394.1px;">15675.53</span>
<span id="t166" class="t" style="top:337.00px;font-size:9.7px;line-height:14px;color:#000;font-weight:bold;letter-spacing:-0.149px;left:379px;">Grand Total</span>
<span id="t167" class="t" style="top:337.00px;font-size:9.7px;line-height:14px;color:#000;font-weight:bold;letter-spacing:-0.177px;right:503.5px;">283332.18</span>
<span id="t168" class="t" style="top:337.00px;font-size:9.7px;line-height:14px;color:#000;font-weight:bold;letter-spacing:-0.177px;right:451.5px;">144738.59</span>
<span id="t169" class="t" style="top:337.00px;font-size:9.7px;line-height:14px;color:#000;font-weight:bold;letter-spacing:-0.177px;right:394.1px;">138593.59</span>
<div style="left:72.45px;top:146.2px;width:11px;height:12.2px;background:#fcfcfc;border:1px solid #bcbcbc;"></div>
<svg style="left:75.45px;top:151.2px" width="5.4" height="3.4"><path d="M0 0H5.4L2.7 3.2Z" fill="#666"/></svg>
<div style="left:432.45px;top:146.2px;width:11px;height:12.2px;background:#fcfcfc;border:1px solid #bcbcbc;"></div>
<svg style="left:435.45px;top:151.2px" width="5.4" height="3.4"><path d="M0 0H5.4L2.7 3.2Z" fill="#666"/></svg>
<div style="left:729px;top:130px;width:14px;height:330px;background:#f0f0f0;"></div>
<div style="left:0px;top:459px;width:743px;height:23px;background:#eeeeee;"></div>
<div style="left:83.5px;top:459px;width:42.2px;height:19.5px;background:#fff;border-radius:0 0 3px 3px;"></div>
<span id="t170" class="t" style="top:462.00px;font-size:9.6px;line-height:14px;color:#222;font-weight:bold;letter-spacing:-0.161px;left:104.6px;transform:translateX(-50%);">Sheet1</span>
<div style="left:89.6px;top:475px;width:30px;height:1.6px;background:#107c41;border-radius:1px;"></div>
<div style="left:128px;top:464.5px;width:1px;height:10.5px;background:#d0d0d0;"></div>
<div style="left:0px;top:481.4px;width:1000px;height:16px;background:#f3f3f3;"></div>
<div style="left:780.5px;top:482px;width:29px;height:15px;background:#dcdcdc;"></div>
<span id="t171" class="t" style="top:483.80px;font-size:8.6px;line-height:14px;color:#333;letter-spacing:-0.469px;left:7px;">Ready</span>
<span id="t172" class="t" style="top:483.80px;font-size:8.6px;line-height:14px;color:#333;letter-spacing:-0.064px;left:57.6px;">Accessibility: Good to go</span>
<span id="t173" class="t" style="top:483.80px;font-size:8.6px;line-height:14px;color:#333;letter-spacing:-0.496px;left:975.2px;">100%</span>
<div style="left:745px;top:130px;width:255px;height:352px;background:#f0f0f0;"></div>
<div style="left:743px;top:130px;width:2px;height:352px;background:#f8f8f8;"></div>
<span id="t174" class="t" style="top:143.00px;font-size:11px;line-height:14px;color:#2a2a2a;font-weight:bold;letter-spacing:-0.244px;left:754px;">PivotTable Fields</span>
<span id="t175" class="t" style="top:165.00px;font-size:9px;line-height:14px;color:#222;left:754px;">Active</span>
<span id="t176" class="t" style="top:165.00px;font-size:9px;line-height:14px;color:#333;letter-spacing:0.161px;left:797px;">All</span>
<div style="left:754px;top:182.2px;width:24.3px;height:1.6px;background:#107c41;border-radius:1px;"></div>
<span id="t177" class="t" style="top:186.00px;font-size:8.8px;line-height:14px;color:#262626;letter-spacing:-0.037px;left:754px;">Choose fields to</span>
<span id="t178" class="t" style="top:197.00px;font-size:8.8px;line-height:14px;color:#262626;letter-spacing:0.119px;left:754px;">add to report:</span>
<div style="left:834px;top:187.3px;width:34px;height:21px;background:#fff;border:1px solid #a2a2a2;"></div>
<div style="left:753.5px;top:218px;width:114.5px;height:18.4px;background:#fff;border:1px solid #a8a8a8;"></div>
<span id="t179" class="t" style="top:220.50px;font-size:9px;line-height:14px;color:#666;letter-spacing:-0.339px;left:759px;">Search</span>
<div style="left:753.5px;top:248.3px;width:114.5px;height:217.7px;background:#fff;border:1px solid #b0b0b0;"></div>
<span id="t180" class="t" style="top:248.60px;font-size:9px;line-height:14px;color:#222;font-weight:bold;letter-spacing:-0.359px;left:782px;">fTransactions1</span>
<div style="left:782.3px;top:264.1px;width:9.4px;height:9.4px;background:#fff;border:1px solid #b2b2b2;border-radius:1px;"></div>
<span id="t181" class="t" style="top:261.80px;font-size:8.8px;line-height:14px;color:#262626;letter-spacing:0.049px;left:796.2px;">Invoice Number</span>
<div style="left:782.3px;top:281.90000000000003px;width:9.4px;height:9.4px;background:#fff;border:1px solid #b2b2b2;border-radius:1px;"></div>
<span id="t182" class="t" style="top:279.60px;font-size:8.8px;line-height:14px;color:#262626;letter-spacing:-0.273px;left:796.2px;">Date</span>
<div style="left:782.3px;top:299.7px;width:9.4px;height:9.4px;background:#fff;border:1px solid #b2b2b2;border-radius:1px;"></div>
<span id="t183" class="t" style="top:297.40px;font-size:8.8px;line-height:14px;color:#262626;letter-spacing:-0.055px;left:796.2px;">Product-ID</span>
<div style="left:782.3px;top:317.2px;width:9.4px;height:9.4px;background:#fff;border:1px solid #b2b2b2;border-radius:1px;"></div>
<span id="t184" class="t" style="top:314.90px;font-size:8.8px;line-height:14px;color:#262626;letter-spacing:0.009px;left:796.2px;">Product-ID.2</span>
<div style="left:782.3px;top:334.8px;width:9.4px;height:9.4px;background:#fff;border:1px solid #b2b2b2;border-radius:1px;"></div>
<span id="t185" class="t" style="top:332.50px;font-size:8.8px;line-height:14px;color:#262626;letter-spacing:-0.405px;left:796.2px;">Net Sales</span>
<div style="left:782.3px;top:352.3px;width:9.4px;height:9.4px;background:#fff;border:1px solid #b2b2b2;border-radius:1px;"></div>
<span id="t186" class="t" style="top:350.00px;font-size:8.8px;line-height:14px;color:#262626;letter-spacing:-0.273px;left:796.2px;">Cost</span>
<div style="left:782.3px;top:369.8px;width:9.4px;height:9.4px;background:#107c41;border-radius:1px;"></div>
<svg style="left:783.6px;top:371.5px" width="7" height="6"><path d="M0.6 2.9L2.6 4.9L6.3 0.9" fill="none" stroke="#fff" stroke-width="1.15"/></svg>
<span id="t187" class="t" style="top:367.50px;font-size:8.8px;line-height:14px;color:#222;font-weight:bold;letter-spacing:0.046px;left:796.5px;">Date (Month)</span>
<div style="left:782.3px;top:387.5px;width:9.4px;height:9.4px;background:#107c41;border-radius:1px;"></div>
<svg style="left:783.6px;top:389.2px" width="7" height="6"><path d="M0.6 2.9L2.6 4.9L6.3 0.9" fill="none" stroke="#fff" stroke-width="1.15"/></svg>
<span id="t188" class="t" style="top:385.00px;font-size:12px;line-height:14px;color:#333;font-weight:bold;font-style:italic;font-family:'Liberation Serif', serif;letter-spacing:-0.300px;left:796.6px;">fx</span>
<span id="t189" class="t" style="top:385.20px;font-size:8.8px;line-height:14px;color:#222;font-weight:bold;letter-spacing:-0.389px;left:809.8px;">total_sales</span>
<div style="left:782.3px;top:405.1px;width:9.4px;height:9.4px;background:#107c41;border-radius:1px;"></div>
<svg style="left:783.6px;top:406.8px" width="7" height="6"><path d="M0.6 2.9L2.6 4.9L6.3 0.9" fill="none" stroke="#fff" stroke-width="1.15"/></svg>
<span id="t190" class="t" style="top:402.60px;font-size:12px;line-height:14px;color:#333;font-weight:bold;font-style:italic;font-family:'Liberation Serif', serif;letter-spacing:-0.300px;left:796.6px;">fx</span>
<span id="t191" class="t" style="top:402.80px;font-size:8.8px;line-height:14px;color:#222;font-weight:bold;letter-spacing:-0.316px;left:809.8px;">total_cost</span>
<div style="left:782.3px;top:422.7px;width:9.4px;height:9.4px;background:#107c41;border-radius:1px;"></div>
<svg style="left:783.6px;top:424.4px" width="7" height="6"><path d="M0.6 2.9L2.6 4.9L6.3 0.9" fill="none" stroke="#fff" stroke-width="1.15"/></svg>
<span id="t192" class="t" style="top:420.20px;font-size:12px;line-height:14px;color:#333;font-weight:bold;font-style:italic;font-family:'Liberation Serif', serif;letter-spacing:-0.300px;left:796.6px;">fx</span>
<span id="t193" class="t" style="top:420.40px;font-size:8.8px;line-height:14px;color:#222;font-weight:bold;left:809.8px;">total_profit</span>
<span id="t194" class="t" style="top:160.00px;font-size:8.8px;line-height:14px;color:#262626;letter-spacing:-0.160px;left:878.8px;">Drag fields between areas</span>
<span id="t195" class="t" style="top:171.20px;font-size:8.8px;line-height:14px;color:#262626;letter-spacing:-0.073px;left:878.8px;">below:</span>
<span id="t196" class="t" style="top:198.80px;font-size:9px;line-height:14px;color:#262626;letter-spacing:-0.214px;left:894.9px;">Filters</span>
<div style="left:878.4px;top:215px;width:112.2px;height:34.8px;background:#fff;"></div>
<div style="left:878.4px;top:254.6px;width:112.2px;height:1px;background:#c8c8c8;"></div>
<span id="t197" class="t" style="top:261.40px;font-size:9px;line-height:14px;color:#262626;letter-spacing:-0.045px;left:894.9px;">Columns</span>
<div style="left:878.4px;top:277.5px;width:112.2px;height:34.2px;background:#fff;"></div>
<div style="left:878.8px;top:278.3px;width:111px;height:15px;background:#fff;border:1px solid #c0c0c0;"></div>
<span id="t198" class="t" style="top:279.00px;font-size:9px;line-height:14px;color:#333;left:885.3px;">Σ</span>
<span id="t199" class="t" style="top:279.00px;font-size:9px;line-height:14px;color:#222;letter-spacing:0.273px;left:893.5px;">Values</span>
<div style="left:878.4px;top:317px;width:112.2px;height:1px;background:#c8c8c8;"></div>
<span id="t200" class="t" style="top:323.60px;font-size:8.4px;line-height:14px;color:#262626;letter-spacing:-0.288px;left:895.8px;">Rows</span>
<div style="left:878.4px;top:340px;width:112.2px;height:34.6px;background:#fff;"></div>
<div style="left:879px;top:340.6px;width:111px;height:14.4px;background:#fff;border:1px solid #c0c0c0;"></div>
<span id="t201" class="t" style="top:340.90px;font-size:9px;line-height:14px;color:#222;letter-spacing:-0.044px;left:884.3px;">Date (Month)</span>
<div style="left:878.4px;top:379.2px;width:112.2px;height:1px;background:#c8c8c8;"></div>
<span id="t202" class="t" style="top:386.20px;font-size:11px;line-height:14px;color:#888;font-family:'Liberation Serif', serif;left:881.8px;">Σ</span>
<span id="t203" class="t" style="top:386.20px;font-size:9px;line-height:14px;color:#262626;letter-spacing:-0.393px;left:895.8px;">Values</span>
<div style="left:879px;top:403.6px;width:97.2px;height:13px;background:#fff;border:1px solid #c0c0c0;"></div>
<span id="t204" class="t" style="top:403.30px;font-size:9px;line-height:14px;color:#222;letter-spacing:-0.321px;left:884px;">total_sales</span>
<div style="left:879px;top:419px;width:97.2px;height:12.7px;background:#fff;border:1px solid #c0c0c0;"></div>
<span id="t205" class="t" style="top:418.60px;font-size:9px;line-height:14px;color:#222;letter-spacing:-0.203px;left:884px;">total_cost</span>
<div style="left:879px;top:434.5px;width:97.2px;height:4.5px;background:#fff;border:1px solid #c0c0c0;border-bottom:none;"></div>
<div style="left:880.6px;top:461.4px;width:9.3px;height:9.6px;background:#fff;border:1px solid #777;border-radius:2px;"></div>
<span id="t206" class="t" style="top:458.90px;font-size:9px;line-height:14px;color:#222;letter-spacing:-0.349px;left:895.8px;">Defer Layo...</span>
<div style="left:954.3px;top:458.5px;width:36.3px;height:15px;background:#f4f4f4;border:1px solid #e0e0e0;border-radius:2px;"></div>
<span id="t207" class="t" style="top:458.90px;font-size:9px;line-height:14px;color:#bdbdbd;letter-spacing:-0.422px;left:972.4px;transform:translateX(-50%);">Update</span>
<svg style="left:0;top:0" width="1000" height="497" viewBox="0 0 1000 497"><path d="M945.8 15.8H943.7V20.8H950.7V18.8" stroke="#fff" fill="none" stroke-width="0.9" /><path d="M946.4 18.6C946.5 16.2 948 14.8 950.6 14.8M948.8 13L950.8 14.8L948.8 16.6" stroke="#fff" fill="none" stroke-width="0.9" /><path d="M984.35 15.93L986.10 17.68L987.85 15.93" stroke="#fff" fill="none" stroke-width="1.1" stroke-linecap="round" stroke-linejoin="round"/><path d="M24.5 37H21.4Q20.4 37 20.4 38V53.2Q20.4 54.2 21.4 54.2H29.5" stroke="#e8a25c" fill="none" stroke-width="1.1" /><path d="M32 37H34.8Q35.8 37 35.8 38V42" stroke="#e8a25c" fill="none" stroke-width="1.1" /><path d="M24.6 39.6V37.3Q24.6 36.3 25.6 36.3H26.6Q26.8 33.8 28.3 33.8Q29.8 33.8 30 36.3H31Q32 36.3 32 37.3V39.6Z" stroke="#666" fill="#fff" stroke-width="0.9" /><rect x="30.2" y="42.6" width="10.2" height="12.7" stroke="#555" fill="#fff" stroke-width="1" rx="0.8" /><path d="M26.45 74.92L28.20 76.67L29.95 74.92" stroke="#333" fill="none" stroke-width="1.1" stroke-linecap="round" stroke-linejoin="round"/><path d="M51.3 33.5L56 42M57 33.5L52.3 42" stroke="#444" fill="none" stroke-width="1" /><circle cx="51.9" cy="43.4" r="1.4" stroke="#2b88d8" fill="none" stroke-width="0.9"/><circle cx="56.5" cy="43.4" r="1.4" stroke="#2b88d8" fill="none" stroke-width="0.9"/><path d="M52 61H49Q48.3 61 48.3 60.3V53Q48.3 52.3 49 52.3H53.5" stroke="#555" fill="none" stroke-width="0.9" /><path d="M52.3 54.3H56.8L59.8 57.3V62.8Q59.8 63.5 59.1 63.5H53Q52.3 63.5 52.3 62.8Z" stroke="#555" fill="#fff" stroke-width="0.9" /><path d="M54.3 59H58M54.3 61H58" stroke="#777" fill="none" stroke-width="0.7" /><path d="M69.65 57.33L71.40 59.08L73.15 57.33" stroke="#333" fill="none" stroke-width="1.1" stroke-linecap="round" stroke-linejoin="round"/><path d="M49 77.5L53.5 73.5L58 78L53 81.8Z" stroke="#e8912d" fill="#f6c48a" stroke-width="0.9" /><path d="M54 73.6L56.2 72L59.8 75.5L58 77.8Z" stroke="#555" fill="#555" stroke-width="0.6" /><path d="M57.5 72.8L59.3 71.2" stroke="#555" fill="none" stroke-width="1.5" /><path d="M78 96.1V90.6H83.5" stroke="#666" fill="none" stroke-width="0.9" /><path d="M80 92.6L83.3 95.89999999999999M83.5 93.19999999999999V96.1H80.6" stroke="#444" fill="none" stroke-width="0.9" /><rect x="92.8" y="36.4" width="89.5" height="17" stroke="#8f8f8f" fill="#fff" stroke-width="0.9" rx="3" /><rect x="184.6" y="36.4" width="30.6" height="17" stroke="#8f8f8f" fill="#fff" stroke-width="0.9" rx="3" /><path d="M176.05 44.33L177.80 46.08L179.55 44.33" stroke="#333" fill="none" stroke-width="1.1" stroke-linecap="round" stroke-linejoin="round"/><path d="M208.95 44.33L210.70 46.08L212.45 44.33" stroke="#333" fill="none" stroke-width="1.1" stroke-linecap="round" stroke-linejoin="round"/><path d="M229 40.6L230.6 39L232.2 40.6" stroke="#2b88d8" fill="none" stroke-width="0.9" /><path d="M247.8 40.4L249.4 42L251 40.4" stroke="#2b88d8" fill="none" stroke-width="0.9" /><path d="M136 72.5H142.2" stroke="#444" fill="none" stroke-width="0.9" /><path d="M151.25 67.72L153.00 69.47L154.75 67.72" stroke="#333" fill="none" stroke-width="1.1" stroke-linecap="round" stroke-linejoin="round"/><rect x="160.5" y="60" width="1" height="16" stroke="none" fill="#e0e0e0" stroke-width="1" rx="0" /><rect x="166.4" y="62.3" width="10" height="10.8" stroke="#777" fill="none" stroke-width="0.9" rx="0" stroke-dasharray="1 1"/><path d="M171.4 62.3V73.1M166.4 67.7H176.4" stroke="#777" fill="none" stroke-width="0.9" /><path d="M166 73.3H177" stroke="#333" fill="none" stroke-width="1.2" /><path d="M183.45 67.72L185.20 69.47L186.95 67.72" stroke="#333" fill="none" stroke-width="1.1" stroke-linecap="round" stroke-linejoin="round"/><rect x="193.5" y="60" width="1" height="16" stroke="none" fill="#e0e0e0" stroke-width="1" rx="0" /><path d="M204 62L208.3 66.3L204.3 70L200.3 66Z" stroke="#444" fill="#fff" stroke-width="0.9" /><path d="M202 64L204.5 61.5" stroke="#444" fill="none" stroke-width="0.9" /><path d="M208.8 66.5Q210 68.5 209.2 69.5Q208.2 69.8 208.2 68.5Z" stroke="#2b88d8" fill="#2b88d8" stroke-width="0.6" /><rect x="198" y="71" width="11.8" height="3.2" stroke="none" fill="#f8f000" stroke-width="1" rx="0" /><path d="M215.65 67.72L217.40 69.47L219.15 67.72" stroke="#333" fill="none" stroke-width="1.1" stroke-linecap="round" stroke-linejoin="round"/><rect x="228.2" y="71" width="11.8" height="3.2" stroke="none" fill="#e81123" stroke-width="1" rx="0" /><path d="M245.65 67.72L247.40 69.47L249.15 67.72" stroke="#333" fill="none" stroke-width="1.1" stroke-linecap="round" stroke-linejoin="round"/><path d="M250.8 96.1V90.6H256.3" stroke="#666" fill="none" stroke-width="0.9" /><path d="M252.8 92.6L256.1 95.89999999999999M256.3 93.19999999999999V96.1H253.4" stroke="#444" fill="none" stroke-width="0.9" /><path d="M269.20 39.5H280.00" stroke="#444" fill="none" stroke-width="0.9" /><path d="M270.70 42.5H278.50" stroke="#444" fill="none" stroke-width="0.9" /><path d="M269.20 45.5H280.00" stroke="#444" fill="none" stroke-width="0.9" /><path d="M288.20 41.5H298.50" stroke="#444" fill="none" stroke-width="0.9" /><path d="M289.70 44.5H297.00" stroke="#444" fill="none" stroke-width="0.9" /><path d="M288.20 47.5H298.50" stroke="#444" fill="none" stroke-width="0.9" /><rect x="304" y="36" width="17.4" height="17.4" stroke="#9a9a9a" fill="#ebebeb" stroke-width="0.9" rx="3" /><path d="M307.50 44.5H317.80" stroke="#444" fill="none" stroke-width="0.9" /><path d="M309.00 47.5H316.30" stroke="#444" fill="none" stroke-width="0.9" /><path d="M307.50 50.5H317.80" stroke="#444" fill="none" stroke-width="0.9" /><text x="326" y="45.5" font-family="Liberation Sans, sans-serif" font-size="7" fill="#444" transform="rotate(-40 328 45)">ab</text><path d="M328 49.2L336.8 41.2M333.8 40.8H337.2V44.2" stroke="#2b88d8" fill="none" stroke-width="1" /><path d="M341.95 44.33L343.70 46.08L345.45 44.33" stroke="#333" fill="none" stroke-width="1.1" stroke-linecap="round" stroke-linejoin="round"/><path d="M358.3 42.6L360.6 45L358.3 47.4" stroke="#2b88d8" fill="none" stroke-width="1" /><path d="M364.3 48.5V41.5M366.3 48.5V41.5M367.2 41.5H363.8" stroke="#444" fill="none" stroke-width="0.9" /><path d="M364.3 41.5Q361.6 41.5 361.6 43.5Q361.6 45.3 364.3 45.3Z" stroke="none" fill="#444" stroke-width="1" /><path d="M374.15 44.33L375.90 46.08L377.65 44.33" stroke="#333" fill="none" stroke-width="1.1" stroke-linecap="round" stroke-linejoin="round"/><path d="M269.20 63.5H280.00" stroke="#444" fill="none" stroke-width="0.9" /><path d="M269.20 66.5H276.50" stroke="#444" fill="none" stroke-width="0.9" /><path d="M269.20 69.5H280.00" stroke="#444" fill="none" stroke-width="0.9" /><path d="M269.20 72.5H276.50" stroke="#444" fill="none" stroke-width="0.9" /><path d="M288.20 63.5H298.50" stroke="#444" fill="none" stroke-width="0.9" /><path d="M289.95 66.5H296.75" stroke="#444" fill="none" stroke-width="0.9" /><path d="M288.20 69.5H298.50" stroke="#444" fill="none" stroke-width="0.9" /><path d="M289.95 72.5H296.75" stroke="#444" fill="none" stroke-width="0.9" /><path d="M307.50 63.5H317.80" stroke="#444" fill="none" stroke-width="0.9" /><path d="M311.00 66.5H317.80" stroke="#444" fill="none" stroke-width="0.9" /><path d="M307.50 69.5H317.80" stroke="#444" fill="none" stroke-width="0.9" /><path d="M311.00 72.5H317.80" stroke="#444" fill="none" stroke-width="0.9" /><path d="M326.40 63.5H336.80" stroke="#444" fill="none" stroke-width="0.9" /><path d="M326.40 72.5H336.80" stroke="#444" fill="none" stroke-width="0.9" /><path d="M331.60 66.5H336.80" stroke="#444" fill="none" stroke-width="0.9" /><path d="M331.60 69.5H336.80" stroke="#444" fill="none" stroke-width="0.9" /><path d="M330.3 68H326.6M328.3 66.2L326.5 68L328.3 69.8" stroke="#2b88d8" fill="none" stroke-width="0.9" /><path d="M345.30 63.5H356.00" stroke="#444" fill="none" stroke-width="0.9" /><path d="M345.30 72.5H356.00" stroke="#444" fill="none" stroke-width="0.9" /><path d="M350.80 66.5H356.00" stroke="#444" fill="none" stroke-width="0.9" /><path d="M350.80 69.5H356.00" stroke="#444" fill="none" stroke-width="0.9" /><path d="M345.5 68H349.3M347.6 66.2L349.4 68L347.6 69.8" stroke="#2b88d8" fill="none" stroke-width="0.9" /><text x="396.2" y="45.3" font-family="Liberation Sans, sans-serif" font-size="8" fill="#3a3a3a">ab</text><text x="396.2" y="49.9" font-family="Liberation Sans, sans-serif" font-size="8" fill="#3a3a3a">c</text><path d="M406 45.8Q406.3 48.2 403.6 48.3H401.2M402.9 46.5L401.1 48.3L402.9 50.1" stroke="#2b88d8" fill="none" stroke-width="1" /><rect x="395.3" y="62.5" width="10.4" height="10.4" stroke="#777" fill="#fff" stroke-width="0.9" rx="0" /><rect x="395.3" y="64.9" width="10.4" height="5.8" stroke="#777" fill="#a6d1f5" stroke-width="0.9" rx="0" /><path d="M400.5 62.5V65M400.5 70.3V72.9" stroke="#777" fill="none" stroke-width="0.9" /><path d="M397 67.7H404M398.3 66.4L397 67.7L398.3 69M402.7 66.4L404 67.7L402.7 69" stroke="#1b6ec2" fill="none" stroke-width="0.8" /><path d="M416.05 67.72L417.80 69.47L419.55 67.72" stroke="#333" fill="none" stroke-width="1.1" stroke-linecap="round" stroke-linejoin="round"/><path d="M423.8 96.1V90.6H429.3" stroke="#666" fill="none" stroke-width="0.9" /><path d="M425.8 92.6L429.1 95.89999999999999M429.3 93.19999999999999V96.1H426.40000000000003" stroke="#444" fill="none" stroke-width="0.9" /><rect x="439" y="36.4" width="106.2" height="17" stroke="#8f8f8f" fill="#fff" stroke-width="0.9" rx="3" /><path d="M539.25 44.33L541.00 46.08L542.75 44.33" stroke="#333" fill="none" stroke-width="1.1" stroke-linecap="round" stroke-linejoin="round"/><path d="M459.35 67.72L461.10 69.47L462.85 67.72" stroke="#333" fill="none" stroke-width="1.1" stroke-linecap="round" stroke-linejoin="round"/><rect x="507.2" y="60" width="1" height="16" stroke="none" fill="#e0e0e0" stroke-width="1" rx="0" /><path d="M512.2 65.2H518.4M514.2 63.2L512.2 65.2L514.2 67.2" stroke="#2b88d8" fill="none" stroke-width="0.9" /><text transform="translate(520.2,67.7) scale(0.66,1)" font-family="Liberation Sans, sans-serif" font-size="8" fill="#3a3a3a">0</text><text transform="translate(513.6,73.7) scale(0.66,1)" font-family="Liberation Sans, sans-serif" font-size="8" fill="#888">.</text><text transform="translate(516.4,73.7) scale(0.66,1)" font-family="Liberation Sans, sans-serif" font-size="8" fill="#8a8a8a">0</text><text transform="translate(520.2,73.7) scale(0.66,1)" font-family="Liberation Sans, sans-serif" font-size="8" fill="#3a3a3a">0</text><text transform="translate(535.2,67.7) scale(0.66,1)" font-family="Liberation Sans, sans-serif" font-size="8" fill="#8a8a8a">0</text><text transform="translate(539.8,67.7) scale(0.66,1)" font-family="Liberation Sans, sans-serif" font-size="8" fill="#3a3a3a">0</text><text transform="translate(539.8,73.7) scale(0.66,1)" font-family="Liberation Sans, sans-serif" font-size="8" fill="#3a3a3a">0</text><text transform="translate(537,73.7) scale(0.66,1)" font-family="Liberation Sans, sans-serif" font-size="8" fill="#888">.</text><path d="M531.2 70.6H537.6M535.6 68.6L537.6 70.6L535.6 72.6" stroke="#2b88d8" fill="none" stroke-width="0.9" /><text id="comma" x="493.9" y="68.1" font-family="Liberation Serif, serif" font-weight="bold" font-size="29" fill="#333">,</text><path d="M543.2 96.1V90.6H548.7" stroke="#666" fill="none" stroke-width="0.9" /><path d="M545.2 92.6L548.5 95.89999999999999M548.7 93.19999999999999V96.1H545.8000000000001" stroke="#444" fill="none" stroke-width="0.9" /><rect x="578.236" y="36.2" width="10.605" height="5.1" stroke="none" fill="#f4828a" stroke-width="1" rx="0" /><rect x="578.236" y="41.300000000000004" width="5.807499999999999" height="5.1" stroke="none" fill="#4a9de0" stroke-width="1" rx="0" /><rect x="578.236" y="46.400000000000006" width="11.614999999999998" height="5.1" stroke="none" fill="#f4828a" stroke-width="1" rx="0" /><rect x="574.6" y="36.2" width="20.2" height="15.299999999999999" stroke="#b5b5b5" fill="none" stroke-width="0.8" rx="0" /><path d="M589.75 36.2V51.5M584.7 41.300000000000004H594.8000000000001M584.7 46.400000000000006H594.8000000000001" stroke="#b5b5b5" fill="none" stroke-width="0.8" /><path d="M574.6 36.2V51.5M578.3875 36.2V51.5M574.6 36.2H588.74M574.6 41.300000000000004H588.74M574.6 46.400000000000006H588.74M574.6 51.5H588.74" stroke="#555" fill="none" stroke-width="0.8" /><path d="M605.45 75.12L607.20 76.88L608.95 75.12" stroke="#333" fill="none" stroke-width="1.1" stroke-linecap="round" stroke-linejoin="round"/><rect x="631.0" y="41.300000000000004" width="15.179999999999998" height="10.2" stroke="none" fill="#5ba7e6" stroke-width="1" rx="0" /><rect x="624.4" y="36.2" width="21.12" height="15.299999999999999" stroke="#555" fill="none" stroke-width="0.8" rx="0" /><path d="M631.0 36.2V51.5M637.6 36.2V51.5M624.4 41.300000000000004H645.52M624.4 46.400000000000006H645.52" stroke="#777" fill="none" stroke-width="0.8" /><path d="M646 41L637.5 49.8" stroke="#fff" fill="none" stroke-width="3.6" stroke-linecap="round"/><path d="M646 41L637.5 49.8" stroke="#9bb7d0" fill="none" stroke-width="1.8" stroke-linecap="round"/><path d="M638 48Q640.5 50.5 637.5 53Q635 54.8 631 54.2Q633.5 52.5 633.7 50.5Q634.5 47.5 638 48Z" stroke="#fff" fill="#3b8fd9" stroke-width="0.7" /><path d="M643.25 75.12L645.00 76.88L646.75 75.12" stroke="#333" fill="none" stroke-width="1.1" stroke-linecap="round" stroke-linejoin="round"/><rect x="666.6" y="38.400000000000006" width="13.5" height="10.3" stroke="none" fill="#5ba7e6" stroke-width="1" rx="0" /><path d="M664 36.2H683.5M664 38.400000000000006H683.5M664 48.7H678M664 51.400000000000006H676M664 36.2V51.400000000000006M666.6 36.2V51.400000000000006M680.1 36.2V42.2M683.5 36.2V41.2" stroke="#555" fill="none" stroke-width="0.8" /><path d="M685.6 41L677.1 49.8" stroke="#fff" fill="none" stroke-width="3.6" stroke-linecap="round"/><path d="M685.6 41L677.1 49.8" stroke="#9bb7d0" fill="none" stroke-width="1.8" stroke-linecap="round"/><path d="M677.6 48Q680.1 50.5 677.1 53Q674.6 54.8 670.6 54.2Q673.1 52.5 673.3000000000001 50.5Q674.1 47.5 677.6 48Z" stroke="#fff" fill="#3b8fd9" stroke-width="0.7" /><path d="M683.55 75.12L685.30 76.88L687.05 75.12" stroke="#333" fill="none" stroke-width="1.1" stroke-linecap="round" stroke-linejoin="round"/><rect x="706.1" y="34.5" width="11" height="9.5" stroke="#b9b9b9" fill="none" stroke-width="0.8" rx="0" stroke-dasharray="1.2 0.8"/><path d="M706.1 37.6H717.1M706.1 40.8H717.1M709.8000000000001 34.5V44M713.6 34.5V44" stroke="#b9b9b9" fill="none" stroke-width="0.8" /><rect x="709.8000000000001" y="37.6" width="7.3" height="3.2" stroke="#b9b9b9" fill="#d6d6d6" stroke-width="0.8" rx="0" /><path d="M755.05 38.92L756.80 40.67L758.55 38.92" stroke="#333" fill="none" stroke-width="1.1" stroke-linecap="round" stroke-linejoin="round"/><rect x="706.1" y="53.5" width="11" height="9.5" stroke="#b9b9b9" fill="none" stroke-width="0.8" rx="0" stroke-dasharray="1.2 0.8"/><path d="M706.1 56.6H717.1M706.1 59.8H717.1" stroke="#b9b9b9" fill="none" stroke-width="0.8" /><path d="M711.9 56.6L715.3000000000001 59.8M715.3000000000001 56.6L711.9 59.8" stroke="#a0a0a0" fill="none" stroke-width="0.9" /><path d="M757.95 58.02L759.70 59.77L761.45 58.02" stroke="#333" fill="none" stroke-width="1.1" stroke-linecap="round" stroke-linejoin="round"/><rect x="708.0" y="75.2" width="7.6" height="4.8" stroke="none" fill="#3b8fd9" stroke-width="1" rx="0" /><path d="M705.6 73.4H718.0M705.6 81.8H718.0M706.5 72V83.2M717.1 72V83.2" stroke="#333" fill="none" stroke-width="0.8" /><path d="M706.5 75.2H717.1M706.5 80H717.1M708.0 73.4V81.8M715.6 73.4V81.8" stroke="#555" fill="none" stroke-width="0.6" /><path d="M751.25 77.12L753.00 78.88L754.75 77.12" stroke="#333" fill="none" stroke-width="1.1" stroke-linecap="round" stroke-linejoin="round"/><path d="M794 36.6V34.6H785.3L790 39.3L785.3 44H794V42" stroke="#333" fill="none" stroke-width="1" stroke-linejoin="miter"/><path d="M804.85 38.52L806.60 40.27L808.35 38.52" stroke="#333" fill="none" stroke-width="1.1" stroke-linecap="round" stroke-linejoin="round"/><rect x="783.6" y="53.6" width="11.4" height="9" stroke="#444" fill="#fff" stroke-width="0.9" rx="0" /><path d="M783.6 55.6H795" stroke="#444" fill="none" stroke-width="1.4" /><path d="M789.3 56.8V61.2M787.4 59.4L789.3 61.3L791.2 59.4" stroke="#2b88d8" fill="none" stroke-width="0.9" /><path d="M799.85 57.73L801.60 59.48L803.35 57.73" stroke="#333" fill="none" stroke-width="1.1" stroke-linecap="round" stroke-linejoin="round"/><path d="M784 78.2L790.5 71.8L795 76.2L788.5 82.6H786.6Z" stroke="#9b4fb5" fill="#fff" stroke-width="0.9" /><path d="M784 78.2L787 75.2L791.5 79.7L788.5 82.6H786.6Z" stroke="#9b4fb5" fill="#b46cc9" stroke-width="0.6" /><path d="M799.85 76.72L801.60 78.47L803.35 76.72" stroke="#333" fill="none" stroke-width="1.1" stroke-linecap="round" stroke-linejoin="round"/><path d="M823.2 43L826.4 35L829.6 43M824.3 40.4H828.5" stroke="#b5b5b5" fill="none" stroke-width="0.9" /><path d="M823.5 45.2H829.3L823.5 53H829.5" stroke="#b5b5b5" fill="none" stroke-width="0.9" /><path d="M831.5 39.3H843L838.6 44.3V49L835.9 50.5V44.3Z" stroke="#b5b5b5" fill="#fff" stroke-width="0.9" /><path d="M841.25 75.12L843.00 76.88L844.75 75.12" stroke="#b5b5b5" fill="none" stroke-width="1.1" stroke-linecap="round" stroke-linejoin="round"/><circle cx="869.2" cy="42.4" r="7.3" stroke="#444" fill="none" stroke-width="0.9"/><path d="M864 47.8L856.2 55.3" stroke="#444" fill="none" stroke-width="1.1" /><path d="M876.95 75.12L878.70 76.88L880.45 75.12" stroke="#333" fill="none" stroke-width="1.1" stroke-linecap="round" stroke-linejoin="round"/><rect x="902.8" y="34.4" width="19.6" height="19.4" stroke="#d8622b" fill="none" stroke-width="0.7" rx="0.8" /><rect x="905.2" y="36.8" width="6.3" height="6.3" stroke="#d8622b" fill="none" stroke-width="0.9" rx="0" /><rect x="913.7" y="36.8" width="6.3" height="6.3" stroke="#d8622b" fill="none" stroke-width="0.9" rx="0" /><rect x="905.2" y="45.3" width="6.3" height="6.3" stroke="#d8622b" fill="none" stroke-width="0.9" rx="0" /><rect x="913.7" y="45.3" width="6.3" height="6.3" stroke="#d8622b" fill="none" stroke-width="0.9" rx="0" /><path d="M980.75 89.38L984.00 92.62L987.25 89.38" stroke="#444" fill="none" stroke-width="1.1" stroke-linecap="round" stroke-linejoin="round"/><path d="M67.50 115.10L70.50 118.10L73.50 115.10" stroke="#444" fill="none" stroke-width="1.0" stroke-linecap="round" stroke-linejoin="round"/><circle cx="87.2" cy="112.6" r="0.75" stroke="none" fill="#666" stroke-width="1"/><circle cx="87.2" cy="116.2" r="0.75" stroke="none" fill="#666" stroke-width="1"/><circle cx="87.2" cy="119.8" r="0.75" stroke="none" fill="#666" stroke-width="1"/><path d="M99.8 112.6L107.2 120.2M107.2 112.6L99.8 120.2" stroke="#c0c0c0" fill="none" stroke-width="0.9" /><path d="M115 116.6L118.2 120.2L125.8 112.4" stroke="#c0c0c0" fill="none" stroke-width="0.9" /><path d="M984.40 113.10L987.40 116.10L990.40 113.10" stroke="#444" fill="none" stroke-width="1.0" stroke-linecap="round" stroke-linejoin="round"/></svg>
<span id="t208" class="t" style="top:38.20px;font-size:9px;line-height:14px;color:#222;letter-spacing:-0.145px;left:95.0px;">Calibri</span>
<span id="t209" class="t" style="top:38.20px;font-size:8.8px;line-height:14px;color:#222;left:186.8px;letter-spacing:-0.8px;">11</span>
<span id="t210" class="t" style="top:37.30px;font-size:13.5px;line-height:14px;color:#444;left:220.6px;">A</span>
<span id="t211" class="t" style="top:38.30px;font-size:11px;line-height:14px;color:#444;left:240.8px;">A</span>
<span id="t212" class="t" style="top:61.00px;font-size:9px;line-height:14px;color:#333;font-weight:bold;left:98.2px;">B</span>
<span id="t213" class="t" style="top:61.00px;font-size:10.5px;line-height:14px;color:#333;font-style:italic;font-family:'Liberation Serif', serif;left:118.3px;">I</span>
<span id="t214" class="t" style="top:60.30px;font-size:9.4px;line-height:14px;color:#333;left:135.6px;">U</span>
<span id="t215" class="t" style="top:59.20px;font-size:11.5px;line-height:14px;color:#444;left:230px;">A</span>
<span id="t216" class="t" style="top:38.20px;font-size:9px;line-height:14px;color:#222;letter-spacing:-0.433px;left:441.2px;">General</span>
<span id="t217" class="t" style="top:61.50px;font-size:12.5px;line-height:14px;color:#444;left:443.6px;">$</span>
<span id="t218" class="t" style="top:61.30px;font-size:12.5px;line-height:14px;color:#444;left:472px;">%</span>
<span id="t219" class="t" style="top:57.30px;font-size:8.8px;line-height:14px;color:#242424;letter-spacing:-0.500px;left:18.7px;">Paste</span>
<span id="t220" class="t" style="top:56.90px;font-size:8.8px;line-height:14px;color:#242424;letter-spacing:0.089px;left:562.2px;">Conditional</span>
<span id="t221" class="t" style="top:68.60px;font-size:8.8px;line-height:14px;color:#242424;letter-spacing:0.075px;left:559.4px;">Formatting</span>
<span id="t222" class="t" style="top:56.90px;font-size:8.8px;line-height:14px;color:#242424;letter-spacing:-0.201px;left:615.7px;">Format as</span>
<span id="t223" class="t" style="top:68.60px;font-size:8.8px;line-height:14px;color:#242424;letter-spacing:-0.606px;left:622px;">Table</span>
<span id="t224" class="t" style="top:56.90px;font-size:8.8px;line-height:14px;color:#242424;letter-spacing:-0.289px;left:667px;">Cell</span>
<span id="t225" class="t" style="top:68.60px;font-size:8.8px;line-height:14px;color:#242424;letter-spacing:-0.395px;left:658.9px;">Styles</span>
<span id="t226" class="t" style="top:32.70px;font-size:8.8px;line-height:14px;color:#b0b0b0;letter-spacing:-0.153px;left:720.6px;">Insert</span>
<span id="t227" class="t" style="top:51.90px;font-size:8.8px;line-height:14px;color:#b0b0b0;letter-spacing:-0.256px;left:720.6px;">Delete</span>
<span id="t228" class="t" style="top:71.00px;font-size:8.8px;line-height:14px;color:#242424;letter-spacing:-0.062px;left:720.6px;">Format</span>
<span id="t229" class="t" style="top:56.90px;font-size:8.8px;line-height:14px;color:#b0b0b0;letter-spacing:0.024px;left:820.5px;">Sort &amp;</span>
<span id="t230" class="t" style="top:68.60px;font-size:8.8px;line-height:14px;color:#b0b0b0;letter-spacing:-0.127px;left:819.2px;">Filter</span>
<span id="t231" class="t" style="top:56.90px;font-size:8.8px;line-height:14px;color:#242424;letter-spacing:0.027px;left:853.8px;">Find &amp;</span>
<span id="t232" class="t" style="top:68.60px;font-size:8.8px;line-height:14px;color:#242424;letter-spacing:-0.426px;left:851.5px;">Select</span>
<span id="t233" class="t" style="top:56.90px;font-size:8.8px;line-height:14px;color:#242424;letter-spacing:0.025px;left:897.8px;">Add-ins</span>
<span id="t234" class="t" style="top:109.30px;font-size:12.5px;line-height:14px;color:#444;font-weight:bold;font-style:italic;font-family:'Liberation Serif', serif;letter-spacing:-0.211px;left:133.8px;">fx</span>
<svg style="left:0;top:0" width="1000" height="497" viewBox="0 0 1000 497"><path d="M948.40 147.00L952.80 151.40L957.20 147.00" stroke="#444" fill="none" stroke-width="1.1" stroke-linecap="round" stroke-linejoin="round"/><path d="M979.2 145.5L987.2 153M987.2 145.5L979.2 153" stroke="#444" fill="none" stroke-width="1.0" /><circle cx="846.8" cy="198" r="4.2" stroke="#555" fill="none" stroke-width="1.0"/><path d="M850.80 198.00L852.20 198.00" stroke="#555" fill="none" stroke-width="1.6" /><path d="M849.63 200.83L850.62 201.82" stroke="#555" fill="none" stroke-width="1.6" /><path d="M846.80 202.00L846.80 203.40" stroke="#555" fill="none" stroke-width="1.6" /><path d="M843.97 200.83L842.98 201.82" stroke="#555" fill="none" stroke-width="1.6" /><path d="M842.80 198.00L841.40 198.00" stroke="#555" fill="none" stroke-width="1.6" /><path d="M843.97 195.17L842.98 194.18" stroke="#555" fill="none" stroke-width="1.6" /><path d="M846.80 194.00L846.80 192.60" stroke="#555" fill="none" stroke-width="1.6" /><path d="M849.63 195.17L850.62 194.18" stroke="#555" fill="none" stroke-width="1.6" /><circle cx="846.8" cy="198" r="1.7" stroke="#555" fill="none" stroke-width="0.9"/><path d="M859.05 197.53L860.80 199.28L862.55 197.53" stroke="#333" fill="none" stroke-width="1.1" stroke-linecap="round" stroke-linejoin="round"/><circle cx="861" cy="225.6" r="3.6" stroke="#444" fill="none" stroke-width="0.9"/><path d="M858.4 228.3L854.6 232.4" stroke="#444" fill="none" stroke-width="1.0" /><path d="M764 252.8V257.2H760.2" stroke="#555" fill="none" stroke-width="0.9" /><rect x="768.2" y="251" width="10.6" height="10.4" stroke="#555" fill="#fff" stroke-width="0.8" rx="0" /><path d="M768.2 253.6H778.8M768.2 256.2H773M768.2 258.8H773M771.7 251V261.4M775.2 251V254" stroke="#777" fill="none" stroke-width="0.7" /><rect x="773.2" y="255" width="5.6" height="6.4" stroke="#d8762b" fill="#fbe3cf" stroke-width="0.8" rx="0" /><path d="M773.2 258.2H778.8M776 255V261.4" stroke="#d8762b" fill="none" stroke-width="0.7" /><path d="M880.8 201.8H888.4L885.6 205.4V209.2L883.6 208V205.4Z" stroke="#8c8c8c" fill="#8c8c8c" stroke-width="0.6" /><path d="M881.6 264.8V271.6" stroke="#888" fill="none" stroke-width="1.3" /><path d="M884.4 264.8V271.6" stroke="#888" fill="none" stroke-width="1.3" /><path d="M887.2 264.8V271.6" stroke="#888" fill="none" stroke-width="1.3" /><path d="M881.8 327.6H889.6" stroke="#888" fill="none" stroke-width="1.3" /><path d="M881.8 330.4H889.6" stroke="#888" fill="none" stroke-width="1.3" /><path d="M881.8 333.2H889.6" stroke="#888" fill="none" stroke-width="1.3" /><path d="M979.95 285.52L981.70 287.27L983.45 285.52" stroke="#333" fill="none" stroke-width="1.1" stroke-linecap="round" stroke-linejoin="round"/><path d="M980.05 347.32L981.80 349.07L983.55 347.32" stroke="#333" fill="none" stroke-width="1.1" stroke-linecap="round" stroke-linejoin="round"/><path d="M967.25 409.73L969.00 411.48L970.75 409.73" stroke="#333" fill="none" stroke-width="1.1" stroke-linecap="round" stroke-linejoin="round"/><path d="M967.25 425.12L969.00 426.88L970.75 425.12" stroke="#333" fill="none" stroke-width="1.1" stroke-linecap="round" stroke-linejoin="round"/><path d="M981.4 409.2L984.4 404.6L987.4 409.2Z" stroke="none" fill="#666" stroke-width="1" /><rect x="981.7" y="413.5" width="5.6" height="12" stroke="none" fill="#777" stroke-width="1" rx="1" /><path d="M981.4 429.2L984.4 433.8L987.4 429.2Z" stroke="none" fill="#666" stroke-width="1" /><path d="M732.8 139.6L736.4 134.6L740 139.6Z" stroke="none" fill="#777" stroke-width="1" /><rect x="733.3" y="143.2" width="6.2" height="290" stroke="none" fill="#747474" stroke-width="1" rx="3" /><path d="M733 452.6L736.3 457.2L739.6 452.6Z" stroke="none" fill="#777" stroke-width="1" /><circle cx="447.2" cy="467.2" r="0.75" stroke="none" fill="#555" stroke-width="1"/><circle cx="447.2" cy="470.4" r="0.75" stroke="none" fill="#555" stroke-width="1"/><circle cx="447.2" cy="473.6" r="0.75" stroke="none" fill="#555" stroke-width="1"/><path d="M467.6 467.6L463.2 470.4L467.6 473.2Z" stroke="none" fill="#777" stroke-width="1" /><rect x="472" y="466.9" width="222.5" height="6.8" stroke="none" fill="#747474" stroke-width="1" rx="3.4" /><path d="M721.2 467.6L725.8 470.4L721.2 473.2Z" stroke="none" fill="#777" stroke-width="1" /><path d="M23.6 466.6L19.8 470.2L23.6 473.8" stroke="#a8a8a8" fill="none" stroke-width="1.0" /><path d="M44.4 466.6L48.2 470.2L44.4 473.8" stroke="#a8a8a8" fill="none" stroke-width="1.0" /><path d="M160.2 470.2H167.6M163.9 466.5V473.9" stroke="#666" fill="none" stroke-width="1.0" /><circle cx="49.6" cy="487" r="1.1" stroke="#444" fill="none" stroke-width="0.8"/><path d="M45 489.2Q49.5 490.6 54 489.2M49.5 490V492.2M49.5 492.2L47 495.4M49.5 492.2L50.6 493.6" stroke="#444" fill="none" stroke-width="0.9" /><path d="M50.8 493.6L52.2 495.2L54.8 491.8" stroke="#444" fill="none" stroke-width="0.9" /><rect x="790.2" y="485.2" width="9.8" height="9.2" stroke="#333" fill="none" stroke-width="0.9" rx="0" /><path d="M793.5 485.2V494.4M796.8 485.2V494.4M790.2 488.3H800M790.2 491.4H800" stroke="#333" fill="none" stroke-width="0.8" /><rect x="819.6" y="485.2" width="9.8" height="9.2" stroke="#444" fill="none" stroke-width="0.9" rx="0" /><rect x="822" y="487.4" width="5" height="4.8" stroke="#444" fill="none" stroke-width="0.8" rx="0" /><path d="M823.3 489H825.7M823.3 490.6H825.7" stroke="#666" fill="none" stroke-width="0.6" /><rect x="849.2" y="485.2" width="9.8" height="9.2" stroke="#444" fill="none" stroke-width="0.9" rx="0" /><path d="M852.6 485.2V490H859" stroke="#444" fill="none" stroke-width="0.9" /><path d="M873.6 490H878.8" stroke="#444" fill="none" stroke-width="1.0" /><path d="M883 490H955.6" stroke="#777" fill="none" stroke-width="0.8" /><rect x="918.2" y="486" width="3" height="8.6" stroke="none" fill="#555" stroke-width="1" rx="0" /><path d="M959.6 490H965.6M962.6 487V493" stroke="#444" fill="none" stroke-width="1.0" /></svg>
</div></body></html>
